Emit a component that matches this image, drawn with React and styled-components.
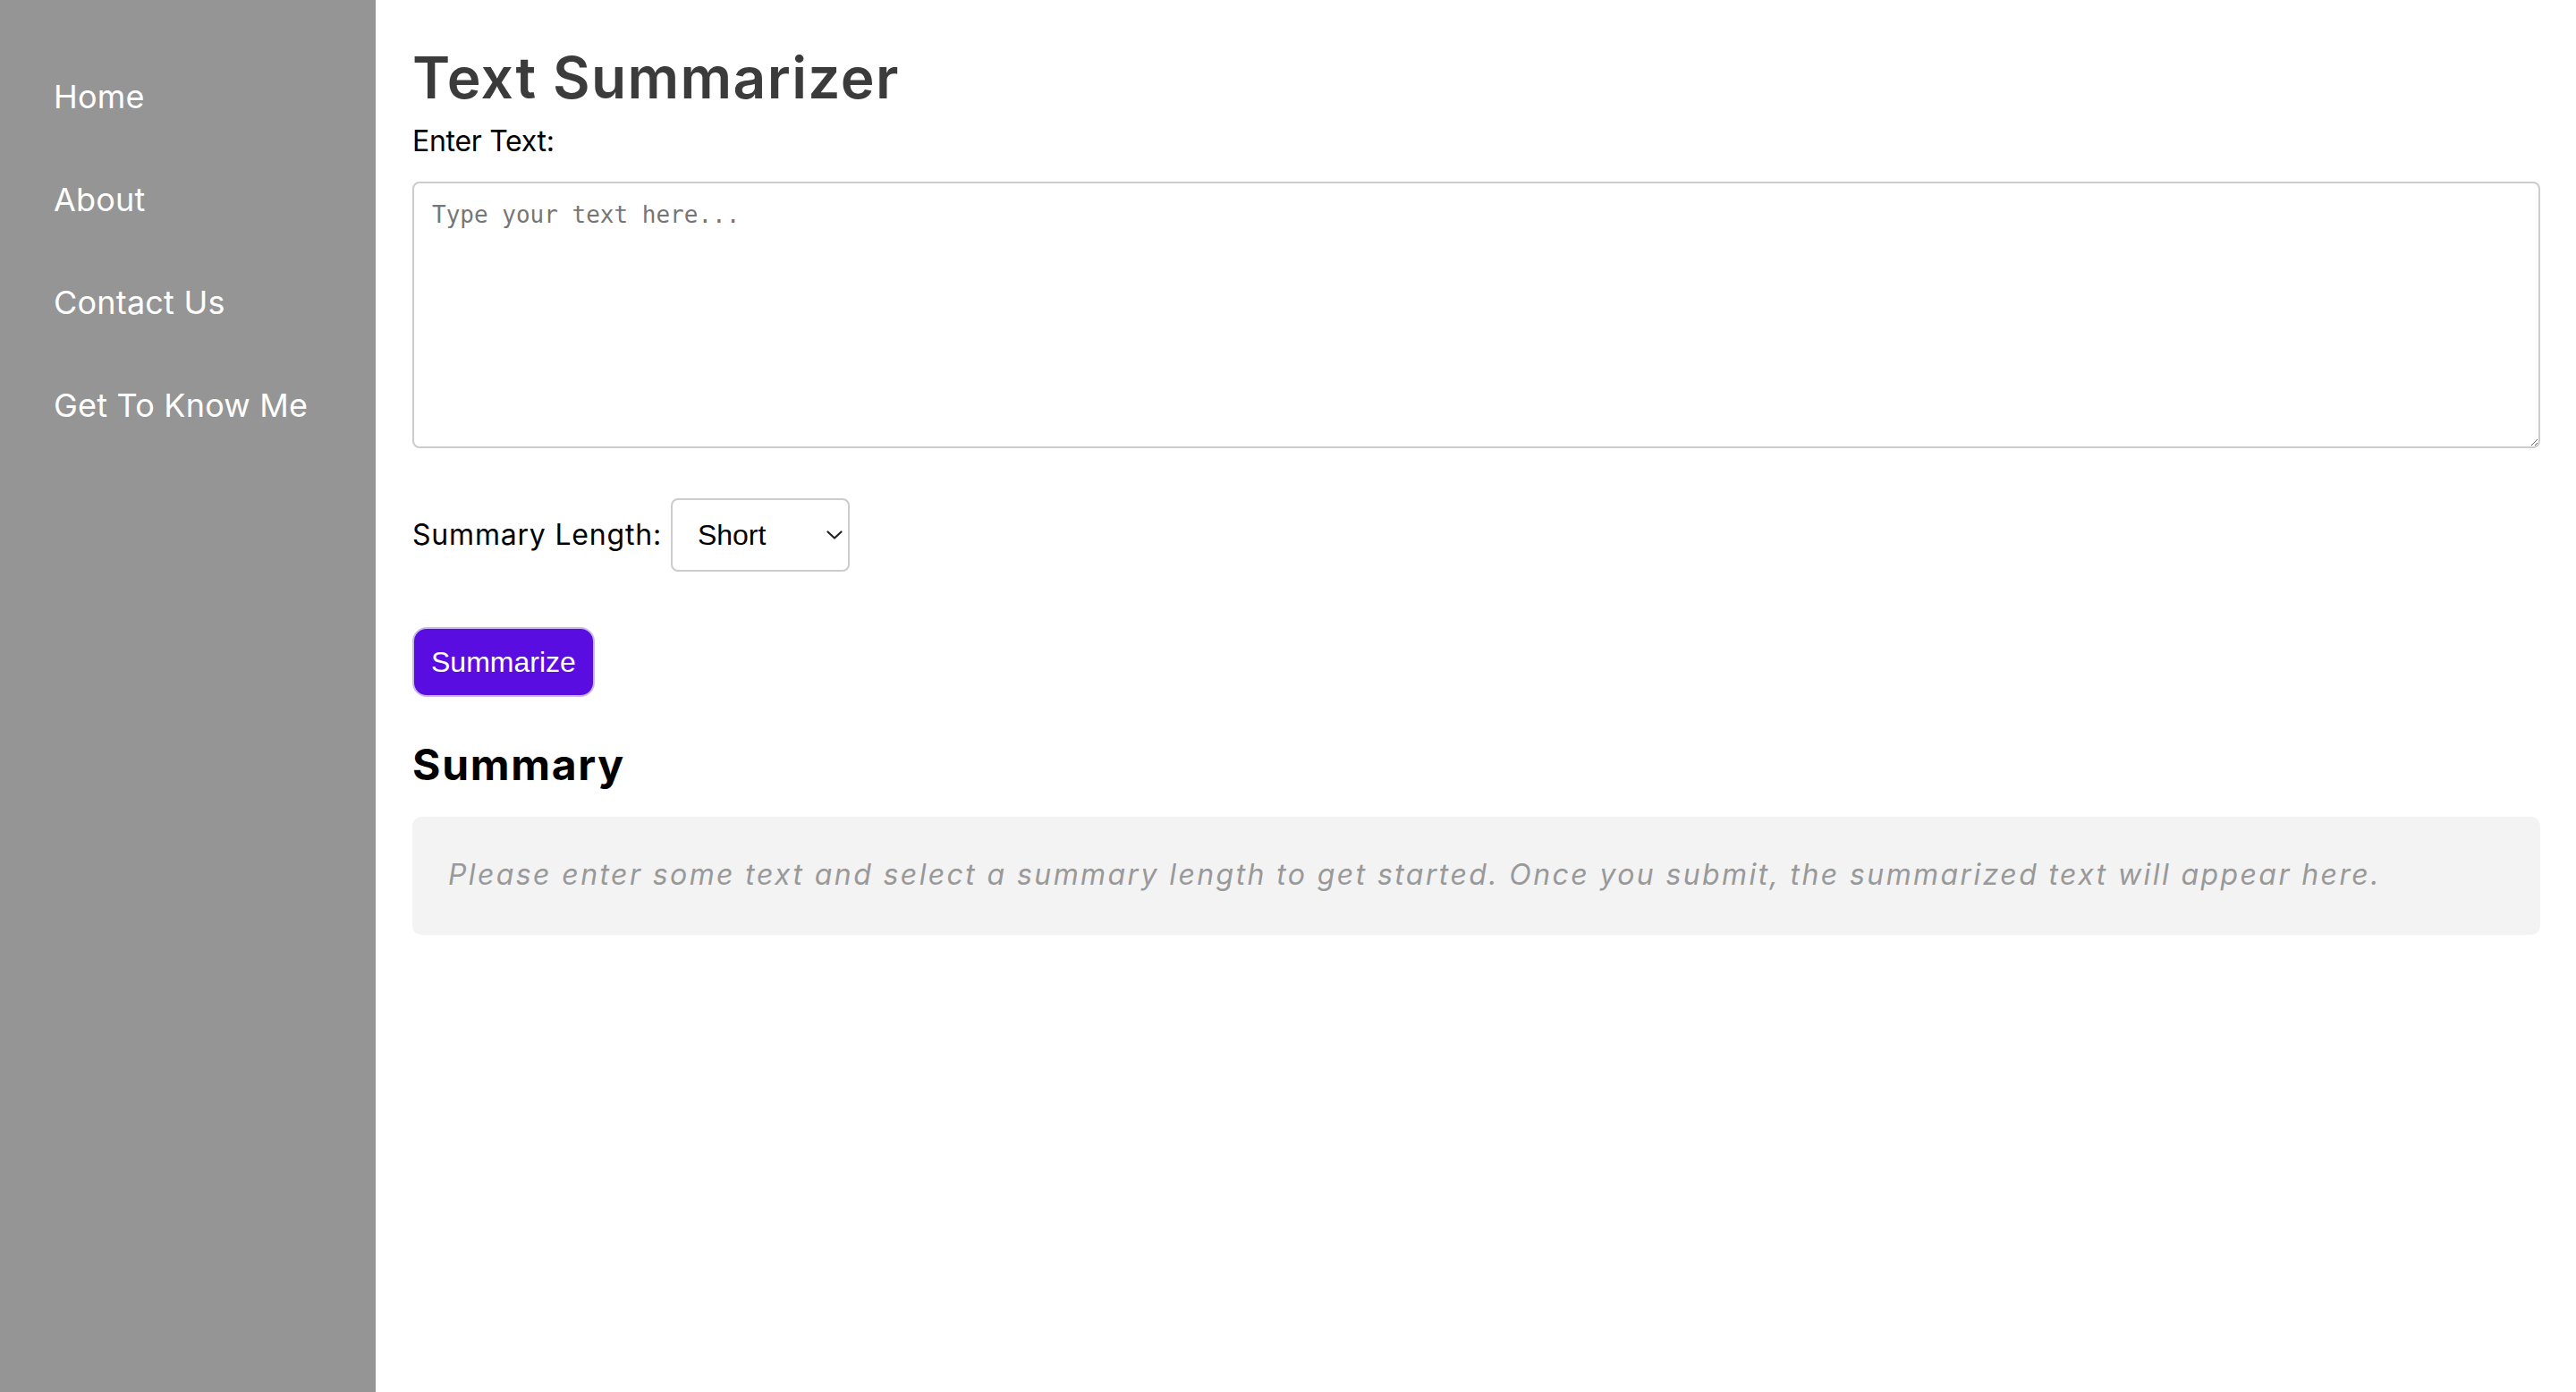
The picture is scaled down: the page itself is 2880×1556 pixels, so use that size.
import React from "react";
import styled, { createGlobalStyle } from "styled-components";

const GlobalStyle = createGlobalStyle`
  * { box-sizing: border-box; }
  html, body { margin: 0; padding: 0; background: #ffffff; }
  body { font-family: "Inter", "Noto Sans", sans-serif; color: #000; }
`;

const Layout = styled.div`
  display: flex;
  min-height: 100vh;
`;

const Sidebar = styled.nav`
  flex: 0 0 420px;
  background: #959595;
  display: flex;
  flex-direction: column;
  gap: 72px;
  padding: 87px 0 0 60px;
`;

const NavLink = styled.a`
  font-family: "Inter", sans-serif;
  font-size: 36px;
  line-height: 43px;
  letter-spacing: 0.2px;
  color: #ffffff;
  text-decoration: none;
  cursor: pointer;
`;

const Main = styled.main`
  flex: 1;
  display: flex;
  flex-direction: column;
  align-items: flex-start;
  padding: 49px 40px 0 41px;
`;

const Title = styled.h1`
  margin: 0;
  font-size: 64px;
  font-weight: 600;
  line-height: 76px;
  letter-spacing: 1.4px;
  color: #3b3b3b;
`;

const Label = styled.label`
  font-size: 32px;
  line-height: 38px;
  letter-spacing: ${(p) => p.$ls || "0px"};
  color: #000;
  margin-top: ${(p) => p.$mt || "0px"};
`;

const TextArea = styled.textarea`
  display: block;
  margin-top: 26px;
  width: 100%;
  height: 298px;
  padding: 20px;
  border: 2px solid #cccccc;
  border-radius: 8px;
  font-family: "DejaVu Sans Mono", monospace;
  font-size: 26px;
  color: #222;
  background: #fff;
  resize: vertical;
  &::placeholder { color: #767676; }
  &:focus { outline: none; }
`;

const LengthRow = styled.div`
  margin-top: 56px;
  display: flex;
  align-items: center;
  gap: 10px;
`;

const SelectWrap = styled.div`
  position: relative;
  width: 200px;
  height: 82px;
`;

const Select = styled.select`
  appearance: none;
  width: 100%;
  height: 100%;
  padding: 0 40px 0 28px;
  border: 2px solid #cccccc;
  border-radius: 8px;
  background: #fff;
  font-family: "Liberation Sans", Arial, sans-serif;
  font-size: 32px;
  color: #000;
  &:focus { outline: none; }
`;

const Chevron = styled.svg`
  position: absolute;
  right: 8px;
  top: 50%;
  margin-top: -5px;
  pointer-events: none;
`;

const Button = styled.button`
  margin-top: 62px;
  height: 78px;
  padding: 0 19px;
  border: 2px solid #c9b9ea;
  border-radius: 16px;
  background: #5a0de0;
  color: #fff;
  font-family: "Liberation Sans", Arial, sans-serif;
  font-size: 32px;
  cursor: pointer;
`;

const SubTitle = styled.h2`
  margin: 47px 0 0;
  font-size: 48px;
  font-weight: 700;
  line-height: 57px;
  letter-spacing: 1.7px;
  color: #000;
`;

const SummaryBox = styled.div`
  margin-top: 30px;
  width: 100%;
  height: 132px;
  padding: 46px 40px 0;
  background: #f3f3f3;
  border-radius: 10px;
`;

const Placeholder = styled.p`
  margin: 0;
  font-size: 32px;
  font-style: italic;
  line-height: 38px;
  letter-spacing: 2.4px;
  color: #999999;
  white-space: nowrap;
`;

const navItems = ["Home", "About", "Contact Us", "Get To Know Me"];

export default function App() {
  return (
    <>
      <GlobalStyle />
      <Layout>
        <Sidebar>
          {navItems.map((item) => (
            <NavLink key={item}>{item}</NavLink>
          ))}
        </Sidebar>
        <Main>
          <Title>Text Summarizer</Title>
          <Label $mt="14px" $ls="-0.3px">Enter Text:</Label>
          <TextArea placeholder="Type your text here..." />
          <LengthRow>
            <Label $ls="0.8px">Summary Length:</Label>
            <SelectWrap>
              <Select defaultValue="short">
                <option value="short">Short</option>
                <option value="medium">Medium</option>
                <option value="long">Long</option>
              </Select>
              <Chevron width="18" height="10" viewBox="0 0 18 10">
                <path d="M1.5 1.5 L9 8.5 L16.5 1.5" fill="none" stroke="#222" strokeWidth="2.2" strokeLinecap="round" strokeLinejoin="round" />
              </Chevron>
            </SelectWrap>
          </LengthRow>
          <Button>Summarize</Button>
          <SubTitle>Summary</SubTitle>
          <SummaryBox>
            <Placeholder>
              Please enter some text and select a summary length to get started. Once you submit, the summarized text will appear here.
            </Placeholder>
          </SummaryBox>
        </Main>
      </Layout>
    </>
  );
}
